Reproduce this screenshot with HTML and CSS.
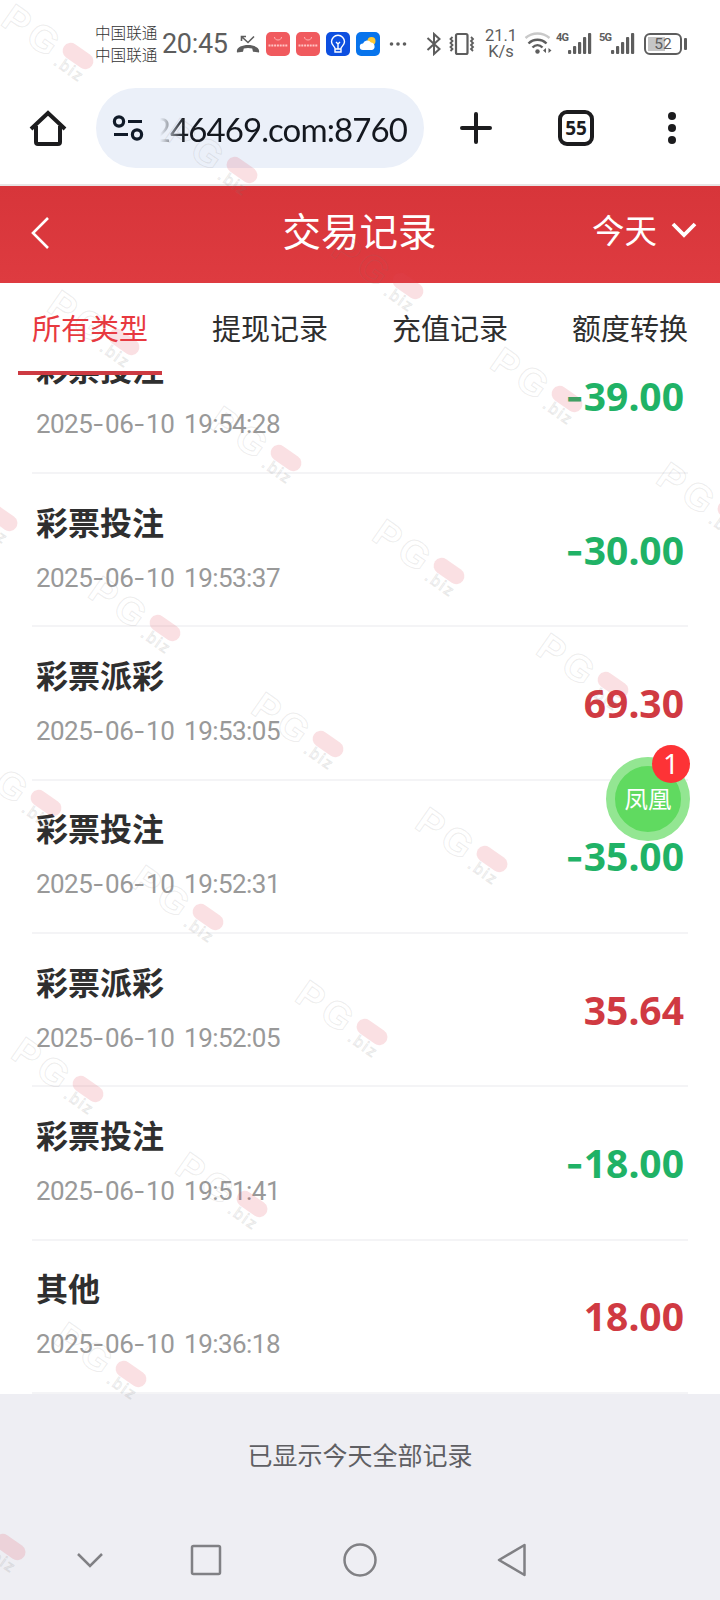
FILE: index.html
```html
<!DOCTYPE html>
<html lang="zh-CN">
<head>
<meta charset="utf-8">
<title>交易记录</title>
<link rel="stylesheet" href="styles.css">
</head>
<body>
<div class="phone">
  <div class="status">
    <div class="carriers"><span>中国联通</span><span>中国联通</span></div>
    <div class="time">20:45</div>
    <svg class="missed" width="24" height="20" viewBox="0 0 24 20"><path d="M1 17.500c-1.200-5 5-7.500 11-7.500s12.200 2.500 11 7.500l-6-.8-.8-3.200c-3-.8-5.400-.8-8.400 0l-.8 3.200z" fill="#5d5d5d"/><path d="M5.500 6V1.500H10M6 2l6 5.500 6-6" fill="none" stroke="#5d5d5d" stroke-width="1.600"/></svg>
    <svg class="app" width="24" height="24" viewBox="0 0 24 24"><rect width="24" height="24" rx="5" fill="#f05a5e"/><path d="M8.500 5c0 4 7 4 7 0" stroke="#ffb4b4" fill="none" stroke-width="1"/><path d="M2.500 13.500h19" stroke="#ffc4c4" stroke-width="1.800" stroke-dasharray="2 .8"/></svg>
    <svg class="app" width="24" height="24" viewBox="0 0 24 24"><rect width="24" height="24" rx="5" fill="#f05a5e"/><path d="M8.500 5c0 4 7 4 7 0" stroke="#ffb4b4" fill="none" stroke-width="1"/><path d="M2.500 13.500h19" stroke="#ffc4c4" stroke-width="1.800" stroke-dasharray="2 .8"/></svg>
    <svg class="app" width="24" height="24" viewBox="0 0 24 24"><rect width="24" height="24" rx="5" fill="#0d4fe0"/><path d="M9 16.500c0-2-3.500-3.200-3.500-6.700a6.500 6.500 0 0 1 13 0c0 3.500-3.500 4.700-3.500 6.700v3.500H9zM9 17h6M10 10l2 2 2-2M12 12v5" fill="none" stroke="#fff" stroke-width="1.400"/></svg>
    <svg class="app" width="24" height="24" viewBox="0 0 24 24"><rect width="24" height="24" rx="5" fill="#0874ec"/><circle cx="15.500" cy="9" r="4" fill="#ffc933"/><path d="M7 18a3.200 3.200 0 0 1 0-6.400 4.500 4.500 0 0 1 8-1 3.800 3.800 0 0 1 1 7.400z" fill="#fff"/></svg>
    <svg class="dots" width="18" height="6"><g fill="#5d5d5d"><circle cx="2.500" cy="3" r="1.800"/><circle cx="9" cy="3" r="1.800"/><circle cx="15.500" cy="3" r="1.800"/></g></svg>
    <svg class="bt" width="16" height="24" viewBox="0 0 16 24" fill="none" stroke="#5d5d5d" stroke-width="2"><path d="M1.500 6l12 11-5.500 5V2l5.500 5-12 11"/></svg>
    <svg class="vib" width="28" height="24" viewBox="0 0 28 24" fill="none" stroke="#5d5d5d"><rect x="8" y="2" width="11.500" height="20" rx="1.500" stroke-width="2.200"/><path d="M4.500 5L2.500 7l2 2-2 2 2 2-2 2 2 2-2 2M23 5l2 2-2 2 2 2-2 2 2 2-2 2 2 2" stroke-width="1.800"/></svg>
    <div class="speed"><span>21.1</span><span>K/s</span></div>
    <svg class="wifi" width="28" height="24" viewBox="0 0 28 24" fill="none" stroke-width="2.400"><path d="M1.500 6c7-6 17-6 24 0" stroke="#c9c9c9"/><path d="M4.500 11.500c5-5 13-5 18 0M8.500 15.500c3-3 7-3 10 0" stroke="#5d5d5d"/><circle cx="13.500" cy="19.500" r="2.200" fill="#5d5d5d"/><path d="M19 18.500l3-2.500v5zM27.500 18.500l-3-2.500v5z" fill="#5d5d5d"/></svg>
    <div class="net">4G</div>
    <svg class="bars" width="24" height="24" viewBox="0 0 24 24" fill="#5d5d5d"><rect y="18" width="3.200" height="4" rx="1"/><rect x="5" y="14" width="3.200" height="8" rx="1"/><rect x="10" y="10" width="3.200" height="12" rx="1"/><rect x="15" y="5" width="3.200" height="17" rx="1"/><rect x="20" y="1" width="3.200" height="21" rx="1"/></svg>
    <div class="net net5">5G</div>
    <svg class="bars" width="24" height="24" viewBox="0 0 24 24" fill="#5d5d5d"><rect y="18" width="3.200" height="4" rx="1"/><rect x="5" y="14" width="3.200" height="8" rx="1"/><rect x="10" y="10" width="3.200" height="12" rx="1"/><rect x="15" y="5" width="3.200" height="17" rx="1"/><rect x="20" y="1" width="3.200" height="21" rx="1"/></svg>
    <div class="battery">52</div><i class="cap"></i>
  </div>

  <div class="toolbar">
    <svg class="home" width="38" height="38" viewBox="0 0 38 38" fill="none" stroke="#1c1c1e" stroke-width="4"><path d="M2 20L19 4l17 16"/><path d="M7 17v16a2 2 0 0 0 2 2h20a2 2 0 0 0 2-2V17"/></svg>
    <div class="url">
      <svg class="tune" width="32" height="28" viewBox="0 0 32 28" fill="none" stroke="#101a28" stroke-width="3.200"><circle cx="7" cy="7.500" r="4.600"/><path d="M16 7.500h14M2 20.500h14"/><circle cx="25" cy="20.500" r="4.600"/></svg>
      <div class="address">246469.com:8760</div>
    </div>
    <svg class="plus" width="32" height="32" viewBox="0 0 32 32" stroke="#1c1c1e" stroke-width="4" stroke-linecap="round"><path d="M2 16h28M16 2v28"/></svg>
    <div class="tabcount">55</div>
    <svg class="more" width="8" height="32" viewBox="0 0 8 32" fill="#1c1c1e"><circle cx="4" cy="4" r="4"/><circle cx="4" cy="16" r="4"/><circle cx="4" cy="28" r="4"/></svg>
  </div>

  <div class="header">
    <svg class="back" width="20" height="34" viewBox="0 0 20 34" fill="none" stroke="#fff" stroke-width="2.600"><path d="M18 2L3 17l15 15"/></svg>
    <h1 class="title">交易记录</h1>
    <div class="day">今天<svg class="chev" width="26" height="18" viewBox="0 0 26 18" fill="none" stroke="#fff" stroke-width="3.800"><path d="M2 4l11 11L24 4"/></svg></div>
  </div>

  <div class="tabs">
    <div class="tab active">所有类型</div><div class="tab">提现记录</div><div class="tab">充值记录</div><div class="tab">额度转换</div>
  </div>

  <div class="list">
    <div class="row"><div><div class="name">彩票投注</div><div class="date">2025<i>-</i>06<i>-</i>10 19:54:28</div></div><div class="amount out"><span class="sign">-</span>39.00</div></div>
    <div class="row"><div><div class="name">彩票投注</div><div class="date">2025<i>-</i>06<i>-</i>10 19:53:37</div></div><div class="amount out"><span class="sign">-</span>30.00</div></div>
    <div class="row"><div><div class="name">彩票派彩</div><div class="date">2025<i>-</i>06<i>-</i>10 19:53:05</div></div><div class="amount">69.30</div></div>
    <div class="row"><div><div class="name">彩票投注</div><div class="date">2025<i>-</i>06<i>-</i>10 19:52:31</div></div><div class="amount out"><span class="sign">-</span>35.00</div></div>
    <div class="row"><div><div class="name">彩票派彩</div><div class="date">2025<i>-</i>06<i>-</i>10 19:52:05</div></div><div class="amount">35.64</div></div>
    <div class="row"><div><div class="name">彩票投注</div><div class="date">2025<i>-</i>06<i>-</i>10 19:51:41</div></div><div class="amount out"><span class="sign">-</span>18.00</div></div>
    <div class="row"><div><div class="name">其他</div><div class="date">2025<i>-</i>06<i>-</i>10 19:36:18</div></div><div class="amount">18.00</div></div>
  </div>

  <div class="end">已显示今天全部记录</div>

  <div class="nav">
    <svg width="28" height="32" viewBox="0 0 28 32"><path d="M2 10l12 12 12-12"/></svg>
    <svg width="32" height="32" viewBox="0 0 32 32"><rect x="2" y="2" width="28" height="28" rx="1.500"/></svg>
    <svg width="34" height="34" viewBox="0 0 34 34"><circle cx="17" cy="17" r="15.500"/></svg>
    <svg width="30" height="34" viewBox="0 0 30 34"><path d="M27.500 2v30L2 17z" stroke-linejoin="round"/></svg>
  </div>

  <div class="float"><div class="bubble">凤凰</div><div class="badge">1</div></div>

  <svg class="marks" width="720" height="1600">
    <defs>
      <g id="mark">
        <g transform="rotate(35)">
          <text class="mark-big" x="-83" y="19">PG</text>
          <text class="mark-small" x="-16" y="21">.biz</text>
          <rect x="-17" y="-8" width="34" height="16" rx="8" fill="#e0485a" fill-opacity=".17"/>
        </g>
      </g>
    </defs>
    <use href="#mark" x="78" y="56"/><use href="#mark" x="242" y="170"/><use href="#mark" x="408" y="286"/><use href="#mark" x="124" y="342"/>
    <use href="#mark" x="567" y="399"/><use href="#mark" x="286" y="458"/><use href="#mark" x="733" y="514"/><use href="#mark" x="2" y="518"/>
    <use href="#mark" x="449" y="571"/><use href="#mark" x="165" y="628"/><use href="#mark" x="613" y="685"/><use href="#mark" x="328" y="744"/>
    <use href="#mark" x="46" y="803"/><use href="#mark" x="492" y="859"/><use href="#mark" x="208" y="917"/><use href="#mark" x="372" y="1032"/>
    <use href="#mark" x="88" y="1089"/><use href="#mark" x="252" y="1204"/><use href="#mark" x="131" y="1374"/><use href="#mark" x="10" y="1547"/>
  </svg>
</div>
</body>
</html>
```
FILE: styles.css
```css
* { box-sizing: border-box; }
body { margin: 0; font-family: "Noto Sans CJK SC", sans-serif; }
.phone { position: relative; width: 720px; height: 1600px; overflow: hidden; background: #fff; display: flex; flex-direction: column; }
.phone svg { display: block; flex: none; }

.status { height: 88px; flex: none; display: flex; align-items: center; color: #5d5d5d; padding-left: 95px; }
.carriers { width: 63px; flex: none; display: flex; flex-direction: column; font-size: 15.600px; line-height: 22px; padding-bottom: 3px; font-weight: 300; color: #333; white-space: nowrap; }
.time { width: 78px; flex: none; padding-left: 4px; font: 27px/30px Roboto, sans-serif; letter-spacing: -.3px; }
.missed { margin-right: 6px; margin-top: 2px; }
.app { margin-right: 6px; }
.dots { margin-left: 3px; margin-right: 19px; }
.bt { margin-right: 6px; }
.vib { margin-right: 8px; }
.speed { width: 34px; flex: none; display: flex; flex-direction: column; align-items: center; font: 16.500px/16px Roboto, sans-serif; }
.wifi { margin-left: 6px; }
.net { align-self: flex-start; margin-top: 32px; margin-left: 4px; width: 12px; flex: none; font: bold 11px/12px Roboto, sans-serif; letter-spacing: -.7px; }
.bars { margin-top: 0; }
.net5 { margin-left: 7px; }
.battery { margin-left: 9px; width: 38px; height: 22px; flex: none; border: 2px solid #5d5d5d; border-radius: 6px; background: linear-gradient(#c5c5c5, #c5c5c5) 2px 2px / 17px 14px no-repeat; font: 15.500px/18px Roboto, sans-serif; text-align: center; }
.cap { width: 3px; height: 12px; margin-left: 2px; border-radius: 1px; background: #5d5d5d; }

.toolbar { height: 98px; flex: none; display: flex; align-items: center; padding: 0 44px 16px 29px; border-bottom: 2px solid #e8e4e4; }
.url { margin-left: 29px; width: 328px; height: 80px; flex: none; border-radius: 40px; background: #ebf0f9; display: flex; align-items: center; padding-left: 16px; }
.address { margin-left: 16px; width: 248px; flex: none; overflow: hidden; display: flex; justify-content: flex-end; font: 33px/44px Lato, sans-serif; letter-spacing: -.9px; color: #14181f; -webkit-mask-image: linear-gradient(90deg, transparent, #000 24px); mask-image: linear-gradient(90deg, transparent, #000 24px); padding: 1px 1px 0 0; }
.plus { margin-left: 36px; }
.tabcount { margin-left: 66px; width: 36px; height: 36px; flex: none; border: 4px solid #1c1c1e; border-radius: 9px; font: bold 19px/28px "Open Sans", sans-serif; text-align: center; color: #1c1c1e; }
.more { margin-left: 74px; }

.header { height: 97px; flex: none; display: grid; grid-template-columns: 1fr auto 1fr; align-items: center; padding: 0 23px 2px 30px; color: #fff; background: linear-gradient(#d7353a, #de3b40); }
.title { margin: 0 4px 0 -4px; padding: 0 0 10px; font-weight: 400; font-size: 38.500px; line-height: 50px; }
.day { justify-self: end; display: flex; align-items: center; gap: 14px; font-size: 32.500px; line-height: 44px; padding-bottom: 9px; }
.back { position: relative; top: -1px; }

.tabs { height: 92px; flex: none; display: grid; grid-template-columns: repeat(4, 1fr); background: #fff; position: relative; z-index: 1; }
.tab { text-align: center; font-size: 29px; line-height: 88px; height: 92px; color: #2e2e2e; }
.tab.active { color: #e8393f; background: linear-gradient(#cd3a42, #cd3a42) 18px 100% / 144px 4px no-repeat; }

.list { height: 1019px; flex: none; display: flex; flex-direction: column; justify-content: flex-end; overflow: hidden; padding: 0 32px; }
.row { height: 153.330px; flex: none; display: flex; justify-content: space-between; align-items: center; padding: 0 4px; border-bottom: 2px solid #f4f4f6; }
.name { margin-top: -5px; font-size: 32px; line-height: 44px; font-weight: 700; color: #2f2f2f; }
.date { margin-top: 17px; font: 26px/36px Roboto, sans-serif; letter-spacing: -.55px; word-spacing: 4px; color: #999; white-space: nowrap; }
.date i { font-family: Inter, sans-serif; font-style: normal; line-height: 1; letter-spacing: .9px; }
.amount { font: bold 39px/50px "Noto Sans", sans-serif; color: #d03a42; }
.amount.out { color: #20b266; }
.sign { font-family: Inter, sans-serif; line-height: 1; }

.end { height: 124px; flex: none; background: #eeeef3; text-align: center; font-size: 25px; line-height: 120px; color: #5f5f63; }
.nav { flex: 1; display: flex; align-items: center; background: #eeeef3; padding: 1px 0 0 76px; fill: none; stroke: #808084; stroke-width: 2.500; }
.nav svg:nth-child(2) { margin-left: 86px; }
.nav svg:nth-child(3) { margin-left: 121px; }
.nav svg:nth-child(4) { margin-left: 120px; }

.float { position: absolute; left: 606px; top: 745px; width: 84px; height: 97px; z-index: 3; }
.bubble { position: absolute; left: 0; top: 12px; width: 84px; height: 84px; border-radius: 50%; border: 9px solid #93e692; background: #60da60; color: #fff; font-size: 23.500px; line-height: 64px; text-align: center; }
.badge { position: absolute; right: 0; top: 0; width: 38px; height: 38px; border-radius: 50%; background: #fd3336; color: #fff; font: 28px/37px "Noto Sans", sans-serif; text-align: center; }
.marks { position: absolute; left: 0; top: 0; z-index: 2; pointer-events: none; }
.mark-big { font: bold 38px "Liberation Sans", sans-serif; letter-spacing: 5px; fill: none; stroke: #777; stroke-opacity: .14; stroke-width: 1px; }
.mark-small { font: 16px "Liberation Sans", sans-serif; letter-spacing: 2px; fill: none; stroke: #777; stroke-opacity: .16; stroke-width: 1px; }
```
